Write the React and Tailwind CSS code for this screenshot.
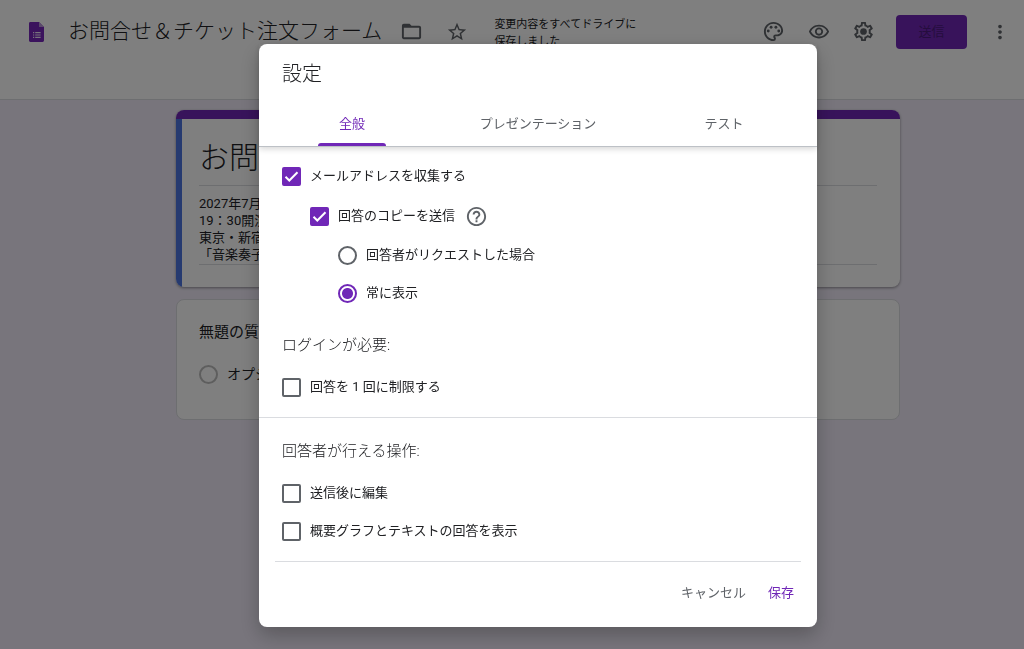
import { useState } from "react";
import {
  MdFolderOpen,
  MdHelpOutline,
  MdMoreVert,
  MdOutlinePalette,
  MdOutlineVisibility,
  MdStarBorder,
} from "react-icons/md";

const TABS = ["全般", "プレゼンテーション", "テスト"];

const DESCRIPTION_LINES = ["2027年7月", "19：30開演", "東京・新宿", "「音楽奏子"];

function FormsLogo() {
  return (
    <svg viewBox="0 0 15 20" className="w-[15px] h-5" aria-hidden="true">
      <path d="M1.4 0H10l5 5v13.600a1.400 1.400 0 0 1-1.400 1.400H1.400A1.400 1.400 0 0 1 0 18.600V1.400A1.400 1.400 0 0 1 1.400 0z" fill="#7627bb" />
      <path d="M10 0l5 5h-5z" fill="#b694d6" />
      <path d="M4 10h1.200v1.200H4zM4 12.400h1.200v1.200H4zM4 14.800h1.200V16H4zM6.200 10h5.400v1.200H6.200zM6.200 12.400h5.400v1.200H6.200zM6.200 14.800h5.400V16H6.200z" fill="#f1e6fa" />
    </svg>
  );
}

function GearIcon() {
  return (
    <svg viewBox="0 0 24 24" className="size-[23px]" fill="currentColor" aria-hidden="true">
      <path d="M19.43 12.98c.04-.32.07-.64.07-.98 0-.34-.03-.66-.07-.98l2.11-1.65c.19-.15.24-.42.12-.64l-2-3.46a.5.5 0 0 0-.61-.22l-2.49 1c-.52-.4-1.08-.73-1.69-.98l-.38-2.65A.488.488 0 0 0 14 2h-4c-.25 0-.46.18-.49.42l-.38 2.65c-.61.25-1.17.59-1.69.98l-2.49-1a.566.566 0 0 0-.18-.03c-.17 0-.34.09-.43.25l-2 3.46c-.13.22-.07.49.12.64l2.11 1.65c-.04.32-.07.65-.07.98 0 .33.03.66.07.98l-2.11 1.65c-.19.15-.24.42-.12.64l2 3.46a.5.5 0 0 0 .61.22l2.49-1c.52.4 1.08.73 1.69.98l.38 2.65c.03.24.24.42.49.42h4c.25 0 .46-.18.49-.42l.38-2.65c.61-.25 1.17-.59 1.69-.98l2.49 1c.06.02.12.03.18.03.17 0 .34-.09.43-.25l2-3.46c.12-.22.07-.49-.12-.64l-2.11-1.65zm-1.98-1.71c.04.31.05.52.05.73 0 .21-.02.43-.05.73l-.14 1.13.89.7 1.08.84-.7 1.21-1.27-.51-1.04-.42-.9.68c-.43.32-.84.56-1.25.73l-1.06.43-.16 1.13-.2 1.35h-1.4l-.19-1.35-.16-1.13-1.06-.43c-.43-.18-.83-.41-1.23-.71l-.91-.7-1.06.43-1.27.51-.7-1.21 1.08-.84.89-.7-.14-1.13c-.03-.31-.05-.54-.05-.74s.02-.43.05-.73l.14-1.13-.89-.7-1.08-.84.7-1.21 1.27.51 1.04.42.9-.68c.43-.32.84-.56 1.25-.73l1.06-.43.16-1.13.2-1.35h1.39l.19 1.35.16 1.13 1.06.43c.43.18.83.41 1.23.71l.91.7 1.06-.43 1.27-.51.7 1.21-1.07.85-.89.7.14 1.13z" />
      <circle cx="12" cy="12" r="3.500" />
    </svg>
  );
}

function IconButton({ label, children }) {
  return (
    <button aria-label={label} className="w-[45px] h-10 shrink-0 flex items-center justify-center text-[#5f6368] cursor-pointer">
      {children}
    </button>
  );
}

function Checkbox({ label, checked, onChange }) {
  return (
    <label className="flex items-center gap-[9px] text-[13px] cursor-pointer">
      <span className="grid size-[19px]">
        <input
          type="checkbox"
          checked={checked}
          onChange={(e) => onChange(e.target.checked)}
          className="col-start-1 row-start-1 size-[19px] appearance-none rounded-[2px] border-2 border-[#5f6368] checked:border-[#7027b7] checked:bg-[#7027b7] cursor-pointer"
        />
        {checked && (
          <svg viewBox="0 0 19 19" className="col-start-1 row-start-1 size-[19px] pointer-events-none" fill="none" stroke="#fff" strokeWidth="2" aria-hidden="true">
            <path d="M3.500 9.800l3.800 3.700 8.200-8.200" />
          </svg>
        )}
      </span>
      {label}
    </label>
  );
}

function Radio({ label, value, selected, onChange }) {
  return (
    <label className="flex items-center gap-[9px] h-[38px] text-[13px] cursor-pointer">
      <input
        type="radio"
        name="copy"
        value={value}
        checked={selected === value}
        onChange={() => onChange(value)}
        className="size-[19px] appearance-none rounded-full border-2 border-[#5f6368] checked:border-[#7027b7] checked:bg-[radial-gradient(circle,#7027b7_5px,#fff_6px)] cursor-pointer"
      />
      {label}
    </label>
  );
}

function SettingsDialog() {
  const [tab, setTab] = useState("全般");
  const [collect, setCollect] = useState(true);
  const [sendCopy, setSendCopy] = useState(true);
  const [copyMode, setCopyMode] = useState("always");
  const [limitOne, setLimitOne] = useState(false);
  const [editAfter, setEditAfter] = useState(false);
  const [showSummary, setShowSummary] = useState(false);

  return (
    <div role="dialog" aria-label="設定" className="w-full max-w-[558px] bg-white rounded-lg shadow-[0_8px_20px_rgba(0,0,0,0.25)] text-[#202124]">
      {/* Title and tabs */}
      <div className="border-b border-[#bdc1c6] shadow-[0_2px_6px_rgba(0,0,0,0.16)]">
        <h2 className="px-[23px] pt-4 text-[20px] leading-7 font-light">設定</h2>
        <div role="tablist" className="flex mt-3">
          {TABS.map((name) => (
            <button
              key={name}
              role="tab"
              aria-selected={tab === name}
              onClick={() => setTab(name)}
              className="flex-1 flex justify-center text-[13px] cursor-pointer"
            >
              <span className={`flex flex-col min-w-[68px] ${tab === name ? 'text-[#7027b7]' : 'text-[#5f6368]'}`}>
                <span className="flex items-center justify-center h-[43px] pt-1">{name}</span>
                <span className={`h-[3px] rounded-t-[3px] ${tab === name ? 'bg-[#7027b7]' : ''}`} />
              </span>
            </button>
          ))}
        </div>
      </div>

      {/* Email collection */}
      <div className="px-[23px] pt-[9px]">
        <div className="flex items-center h-10">
          <Checkbox label="メールアドレスを収集する" checked={collect} onChange={setCollect} />
        </div>
        <div className="flex items-center gap-[10px] h-10 pl-7">
          <Checkbox label="回答のコピーを送信" checked={sendCopy} onChange={setSendCopy} />
          <button aria-label="ヘルプ" className="text-[#5f6368] cursor-pointer">
            <MdHelpOutline size={23} />
          </button>
        </div>
        <div className="pl-14">
          <Radio label="回答者がリクエストした場合" value="request" selected={copyMode} onChange={setCopyMode} />
          <Radio label="常に表示" value="always" selected={copyMode} onChange={setCopyMode} />
        </div>

        <h3 className="mt-[21px] mb-[11px] text-[15px] leading-6 font-light">ログインが必要:</h3>
        <div className="flex items-center h-[38px]">
          <Checkbox label="回答を 1 回に制限する" checked={limitOne} onChange={setLimitOne} />
        </div>
      </div>

      <hr className="mt-[11px] border-[#dadce0]" />

      {/* Respondent permissions */}
      <div className="px-[23px]">
        <h3 className="mt-[21px] mb-[11px] text-[15px] leading-6 font-light">回答者が行える操作:</h3>
        <div className="flex items-center h-[38px]">
          <Checkbox label="送信後に編集" checked={editAfter} onChange={setEditAfter} />
        </div>
        <div className="flex items-center h-[38px]">
          <Checkbox label="概要グラフとテキストの回答を表示" checked={showSummary} onChange={setShowSummary} />
        </div>
      </div>

      <hr className="mt-[11px] mx-4 border-[#dadce0]" />

      <div className="flex justify-end gap-[22px] px-[23px] pt-[13px] pb-4 text-[13px]">
        <button className="h-9 text-[#5f6368] cursor-pointer">キャンセル</button>
        <button className="h-9 text-[#7027b7] cursor-pointer">保存</button>
      </div>
    </div>
  );
}

export default function App() {
  return (
    <div className="min-h-screen bg-[#f0ebf8] text-[#202124] font-['Roboto','Noto_Sans_CJK_JP',sans-serif]">
      <header className="bg-white border-b border-[#dadce0] pb-9">
        <div className="flex items-center h-[63px] pl-[29px] pr-[2px]">
          <FormsLogo />
          <h1 className="ml-6 mr-[7px] text-[21px] font-light whitespace-nowrap">お問合せ＆チケット注文フォーム</h1>
          <IconButton label="フォルダに移動"><MdFolderOpen size={23} /></IconButton>
          <IconButton label="スターを付ける"><MdStarBorder size={22} /></IconButton>
          <p className="ml-[15px] w-[150px] pt-[2px] text-[11px] leading-[17px]">変更内容をすべてドライブに保存しました</p>
          <div className="flex items-center ml-auto">
            <IconButton label="テーマをカスタマイズ"><MdOutlinePalette size={23} /></IconButton>
            <IconButton label="プレビュー"><MdOutlineVisibility size={22} /></IconButton>
            <IconButton label="設定"><GearIcon /></IconButton>
            <button className="w-[71px] h-[34px] mx-[10px] rounded bg-[#7027b7] text-[#4a1a7c] text-[13px] cursor-pointer">送信</button>
            <IconButton label="その他"><MdMoreVert size={22} /></IconButton>
          </div>
        </div>
      </header>

      <main className="flex flex-col items-center gap-3 pl-[52px] pt-[10px]">
        <section className="w-full max-w-[724px] rounded-lg overflow-hidden bg-white shadow-[0_1px_3px_rgba(0,0,0,0.4)]">
          <div className="h-[9px] bg-[#7027b7]" />
          <div className="border-l-[6px] border-[#4d74e0] pl-[17px] pr-[23px] pt-[18px] pb-[22px]">
            <h2 className="h-[49px] text-[30px] leading-[42px] font-light border-b border-[#dadce0]">お問合せ＆チケット注文フォーム</h2>
            <div className="pt-[9px] pb-[1px] text-[13px] leading-[17px] border-b border-[#dadce0]">
              {DESCRIPTION_LINES.map((line) => (
                <p key={line}>{line}</p>
              ))}
            </div>
          </div>
        </section>

        <section className="w-full max-w-[724px] h-[121px] rounded-lg bg-white border border-[#dadce0] px-[22px] pt-5">
          <h3 className="text-[15px] leading-6">無題の質問</h3>
          <label className="flex items-center gap-[9px] mt-5 text-[14px] leading-5">
            <input type="radio" name="option" className="size-[19px] appearance-none rounded-full border-2 border-[#bdbdbd]" />
            オプション 1
          </label>
        </section>
      </main>

      <div className="fixed inset-0 bg-black/50 overflow-y-auto flex justify-center items-start pl-[52px] pt-11">
        <SettingsDialog />
      </div>
    </div>
  );
}
